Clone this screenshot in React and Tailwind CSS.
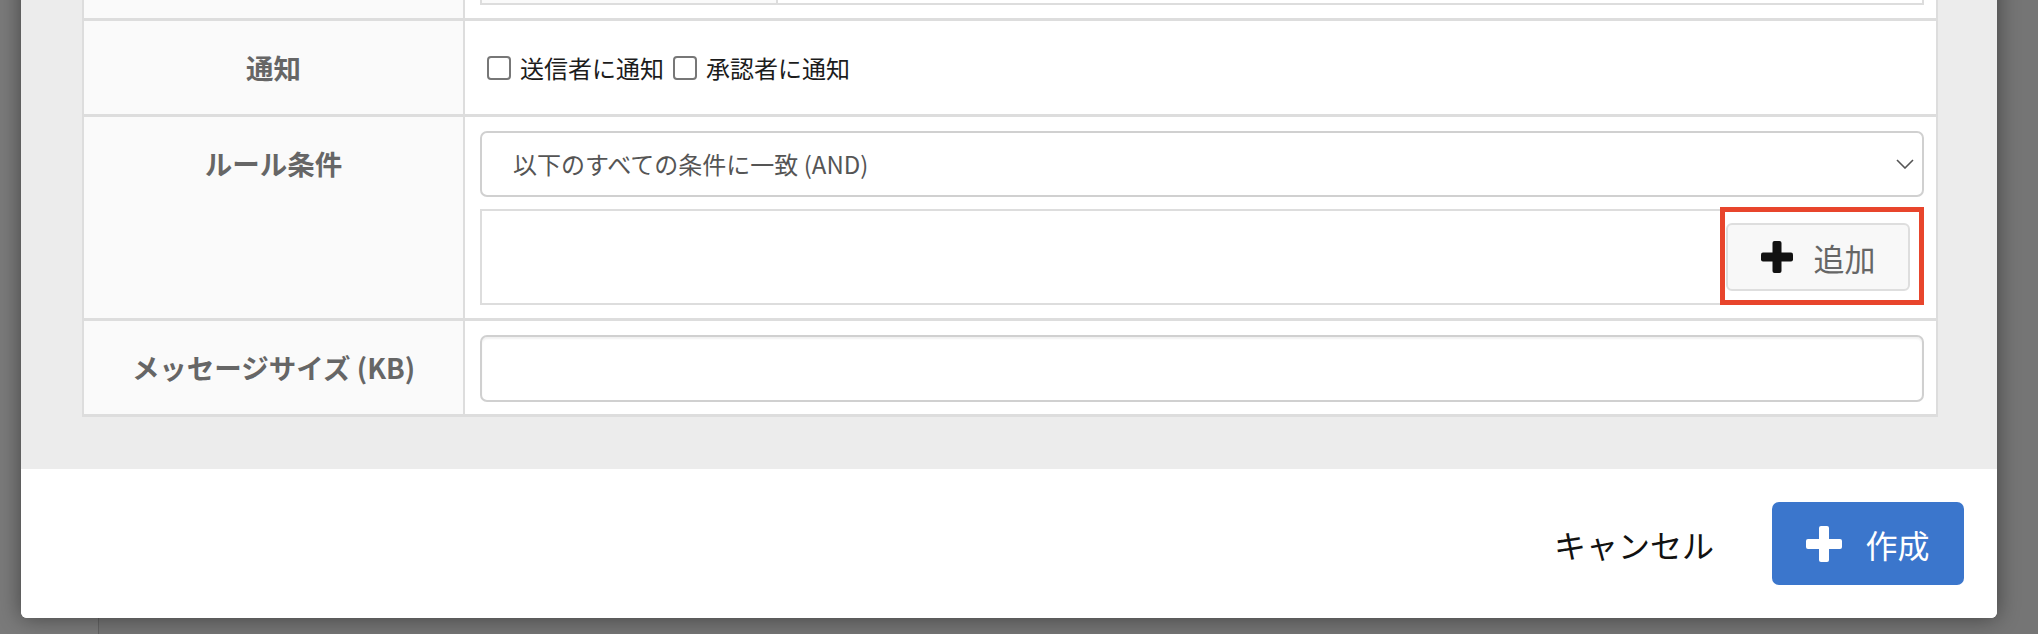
import React from "react";

const FONT = { fontFamily: '"Noto Sans CJK JP", "Noto Sans", sans-serif' };

// --- icons ---
const PlusIcon = ({ size, bar, color }) => (
    <svg width={size} height={size} viewBox={`0 0 ${size} ${size}`} className="shrink-0">
        <rect x={(size - bar) / 2} y="0" width={bar} height={size} rx="2" fill={color} />
        <rect x="0" y={(size - bar) / 2} width={size} height={bar} rx="2" fill={color} />
    </svg>
);

const Chevron = () => (
    <svg width="18" height="10" viewBox="0 0 18 10" className="shrink-0">
        <polyline points="1,1 9,9 17,1" fill="none" stroke="#555" strokeWidth="1.6" />
    </svg>
);

const Checkbox = ({ label }) => (
    <label className="flex items-center gap-[9px]">
        <span className="block h-[24px] w-[24px] rounded-[4px] border-2 border-[#777] bg-white" />
        <span className="text-[24px] leading-none text-[#1c1c1c]">{label}</span>
    </label>
);

// one table row: gray label cell on the left, field on the right
const Row = ({ label, top = false, children, className = "" }) => (
    <div className={"flex border-b-[3px] border-[#dddddd] " + className}>
        <div
            className={
                "flex w-[381px] shrink-0 justify-center border-r-2 border-[#dddddd] bg-[#fafafa] " +
                (top ? "items-start pt-[14px]" : "items-center")
            }
        >
            <div className={"flex items-center text-[27.5px] font-bold text-[#666] " + (top ? "h-[66px]" : "")}>
                {label}
            </div>
        </div>
        <div className="flex-1 bg-white pl-[15px] pr-[12px]">{children}</div>
    </div>
);

export default function App() {
    return (
        <div className="relative h-[634px] w-[2038px] overflow-hidden" style={FONT}>
            {/* page behind the backdrop */}
            <div className="flex h-full">
                <div className="w-[99px] border-r border-[#636363] bg-[#7a7a7a]" />
                <div className="flex-1 bg-[#757575]" />
            </div>

            {/* modal */}
            <div className="absolute left-[21px] top-[-108px] w-[1976px] overflow-hidden rounded-[6px] bg-white shadow-[0_0_22px_rgba(0,0,0,0.45)]">
                <div className="bg-[#ececec] pb-[52px] pl-[61px] pr-[59px] pt-[30px]">
                    <div className="border-x-2 border-t-2 border-[#dddddd]">
                        {/* row cut off at the top */}
                        <Row label="" className="h-[97px]">
                            <div className="mt-[14px] flex h-[67px] border-2 border-[#dddddd]">
                                <div className="w-[296px] border-r-2 border-[#dddddd] bg-[#fafafa]" />
                                <div className="flex-1 bg-white" />
                            </div>
                        </Row>

                        <Row label="通知" className="h-[96px]">
                            <div className="flex h-full items-center gap-[9px] pl-[7px]">
                                <Checkbox label="送信者に通知" />
                                <Checkbox label="承認者に通知" />
                            </div>
                        </Row>

                        <Row label="ルール条件" top>
                            <div className="flex flex-col gap-[12px] pb-[13px] pt-[14px]">
                                <div className="flex h-[66px] items-center justify-between rounded-[7px] border-2 border-[#d0d0d0] bg-white pl-[31px] pr-[8px]">
                                    <span className="text-[24px] text-[#555]">以下のすべての条件に一致 (AND)</span>
                                    <Chevron />
                                </div>
                                <div className="flex h-[96px] items-center justify-end border-2 border-[#dddddd] bg-white pr-[12px]">
                                    <div className="relative">
                                        <button className="flex h-[68px] w-[184px] items-center justify-center gap-[21px] rounded-[6px] border-2 border-[#dedede] bg-[#f8f8f8]">
                                            <PlusIcon size={32} bar={9} color="#111" />
                                            <span className="text-[31px] leading-none text-[#666]">追加</span>
                                        </button>
                                        {/* highlight annotation */}
                                        <div className="pointer-events-none absolute -bottom-[14px] -left-[6px] -right-[14px] -top-[16px] border-[5px] border-[#e8452c]" />
                                    </div>
                                </div>
                            </div>
                        </Row>

                        <Row label="メッセージサイズ (KB)" className="h-[96px]">
                            <div className="pb-[12px] pt-[14px]">
                                <div className="h-[67px] rounded-[7px] border-2 border-[#d0d0d0] bg-white shadow-[inset_0_2px_2px_rgba(0,0,0,0.06)]" />
                            </div>
                        </Row>
                    </div>
                </div>

                {/* footer */}
                <div className="flex items-center justify-end gap-[58px] bg-white py-[33px] pr-[33px]">
                    <button className="text-[32px] leading-none text-[#111]">キャンセル</button>
                    <button className="flex h-[83px] w-[192px] items-center justify-center gap-[23px] rounded-[7px] bg-[#3b76cc]">
                        <PlusIcon size={36} bar={10} color="#fff" />
                        <span className="text-[32px] leading-none text-white">作成</span>
                    </button>
                </div>
            </div>
        </div>
    );
}
